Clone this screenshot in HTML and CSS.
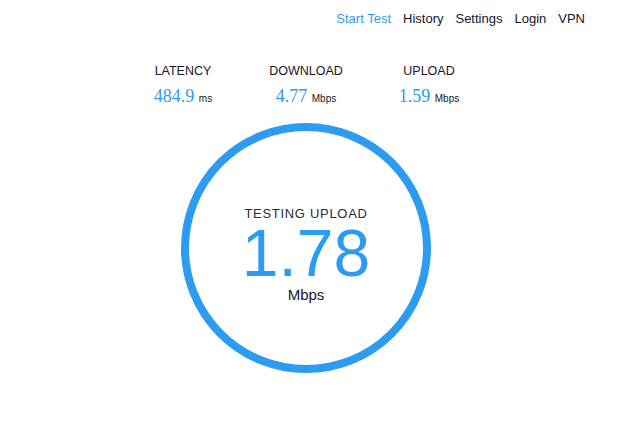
FILE: index.html
```html
<!DOCTYPE html>
<html>
<head>
<meta charset="utf-8">
<link rel="stylesheet" href="styles.css">
</head>
<body>
<div class="page">
  <nav class="nav">
    <a class="nav-link active">Start Test</a>
    <a class="nav-link">History</a>
    <a class="nav-link">Settings</a>
    <a class="nav-link">Login</a>
    <a class="nav-link">VPN</a>
  </nav>
  <div class="stats">
    <div class="stat">
      <div class="stat-label">LATENCY</div>
      <div class="stat-value"><span class="num">484.9</span> <span class="unit">ms</span></div>
    </div>
    <div class="stat">
      <div class="stat-label">DOWNLOAD</div>
      <div class="stat-value"><span class="num">4.77</span> <span class="unit">Mbps</span></div>
    </div>
    <div class="stat">
      <div class="stat-label">UPLOAD</div>
      <div class="stat-value"><span class="num">1.59</span> <span class="unit">Mbps</span></div>
    </div>
  </div>
  <div class="gauge">
    <div class="gauge-label">TESTING UPLOAD</div>
    <div class="gauge-value">1.78</div>
    <div class="gauge-unit">Mbps</div>
  </div>
</div>
</body>
</html>
```
FILE: styles.css
```css
html, body {
  margin: 0;
  padding: 0;
  background: #fff;
}
body {
  font-family: "Liberation Sans", Arial, sans-serif;
  color: #1a1a2a;
}
.page {
  width: 612px;
  display: flex;
  flex-direction: column;
  align-items: center;
}
.nav {
  align-self: stretch;
  display: flex;
  justify-content: flex-end;
  gap: 12px;
  padding: 11px 27px 0 0;
  font-size: 13px;
  line-height: 16px;
}
.nav-link {
  color: #15152a;
}
.nav-link.active {
  color: #2d9bf0;
}
.stats {
  display: flex;
  margin-top: 37px;
}
.stat {
  width: 123px;
  text-align: center;
}
.stat-label {
  font-size: 12.5px;
  line-height: 14px;
  color: #15152a;
}
.stat-value {
  margin-top: 8px;
  line-height: 20px;
}
.num {
  font-family: "Liberation Serif", "Times New Roman", serif;
  font-size: 18px;
  color: #2d9bf0;
}
.unit {
  font-size: 10px;
  color: #15152a;
}
.gauge {
  margin-top: 14px;
  width: 250px;
  height: 250px;
  box-sizing: border-box;
  border: 8px solid #2d9bf0;
  border-radius: 50%;
  display: flex;
  flex-direction: column;
  align-items: center;
  padding-top: 75px;
}
.gauge-label {
  font-size: 13px;
  letter-spacing: 0.7px;
  line-height: 16px;
  color: #2a2a35;
}
.gauge-value {
  font-size: 66px;
  line-height: 66px;
  color: #2d9bf0;
  margin-top: -2px;
}
.gauge-unit {
  font-size: 15px;
  line-height: 18px;
  color: #15152a;
}
```
